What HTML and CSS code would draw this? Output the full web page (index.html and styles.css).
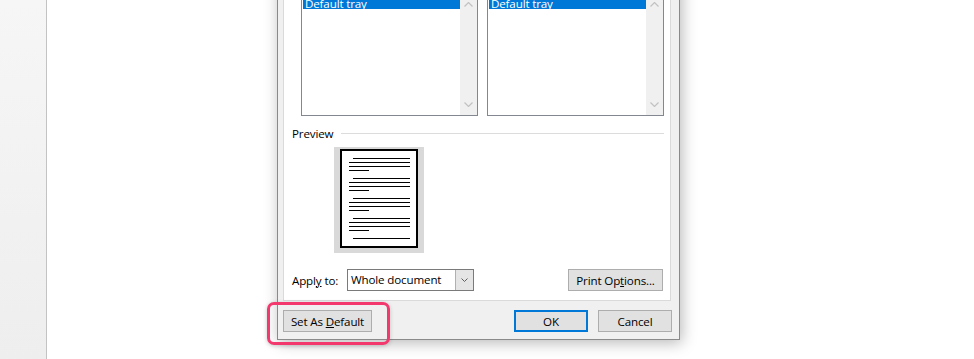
FILE: index.html
```html
<!DOCTYPE html>
<html lang="en">

<head>
  <meta charset="UTF-8">
  <title>Page Setup - Paper</title>
  <link rel="stylesheet" href="styles.css">
</head>

<body>
  <div class="screen">
    <div class="sidebar"></div>
    <div class="desk">
      <div class="dialog">
        <div class="panel">
          <div class="trays">
            <div class="listbox">
              <div class="items">
                <div class="item selected">Default tray</div>
              </div>
              <div class="scrollbar">
                <div class="arrow">
                  <svg width="9" height="5" viewBox="0 0 9 5"><path d="M0.5 4.5 L4.5 0.5 L8.5 4.5" /></svg>
                </div>
                <div class="arrow">
                  <svg width="9" height="5" viewBox="0 0 9 5"><path d="M0.5 0.5 L4.5 4.5 L8.5 0.5" /></svg>
                </div>
              </div>
            </div>
            <div class="listbox">
              <div class="items">
                <div class="item selected">Default tray</div>
              </div>
              <div class="scrollbar">
                <div class="arrow">
                  <svg width="9" height="5" viewBox="0 0 9 5"><path d="M0.5 4.5 L4.5 0.5 L8.5 4.5" /></svg>
                </div>
                <div class="arrow">
                  <svg width="9" height="5" viewBox="0 0 9 5"><path d="M0.5 0.5 L4.5 4.5 L8.5 0.5" /></svg>
                </div>
              </div>
            </div>
          </div>

          <div class="group-title">
            <span>Preview</span>
            <div class="rule"></div>
          </div>

          <div class="preview">
            <svg width="90" height="106" viewBox="0 0 90 106">
              <rect x="0" y="0" width="90" height="106" fill="#d9d9d9" />
              <rect x="7" y="3" width="76" height="97" fill="#fff" stroke="#000" stroke-width="2" />
              <g stroke="#000" stroke-width="1">
                <path d="M19 11.5 H76 M15 15.5 H76 M15 19.5 H76 M15 23.5 H35" />
                <path d="M19 31.5 H76 M15 35.5 H76 M15 39.5 H76 M15 43.5 H35" />
                <path d="M19 51.5 H76 M15 55.5 H76 M15 59.5 H76 M15 63.5 H35" />
                <path d="M19 71.5 H76 M15 75.5 H76 M15 79.5 H76 M15 83.5 H35" />
                <path d="M19 91.5 H76" />
              </g>
            </svg>
          </div>

          <div class="apply-row">
            <label class="apply-label">Appl<u>y</u> to:</label>
            <div class="combo">
              <span class="combo-value">Whole document</span>
              <span class="combo-button">
                <svg width="7" height="4" viewBox="0 0 7 4"><path d="M0.5 0.5 L3.5 3.5 L6.5 0.5" /></svg>
              </span>
            </div>
            <button class="btn print-options">Print Op<u>t</u>ions...</button>
          </div>
        </div>

        <div class="footer">
          <button class="btn set-default">Set As <u>D</u>efault</button>
          <button class="btn ok">OK</button>
          <button class="btn cancel">Cancel</button>
          <div class="highlight"></div>
        </div>
      </div>
    </div>
  </div>
</body>

</html>
```

FILE: styles.css
```css
body {
  margin: 0;
  padding: 0;
  background: #fff;
  font-family: "Open Sans", Arial, sans-serif;
  font-size: 11.6px;
  letter-spacing: -0.15px;
  color: #000;
  overflow: hidden;
}

.screen {
  display: flex;
  height: 359px;
}

.sidebar {
  width: 46px;
  background: linear-gradient(#f6f6f6, #eeeeee);
  border-right: 1px solid #c3c3c3;
}

.desk {
  flex: 1;
  padding-left: 230px;
}

.dialog {
  box-sizing: border-box;
  width: 403px;
  height: 370px;
  margin-top: -30px;
  padding: 0 7px 0 5px;
  background: #f0f0f0;
  border: 1px solid #8a8a8a;
  border-top: none;
  box-shadow: 2px 3px 14px rgba(0, 0, 0, 0.28);
}

/* white tab page */
.panel {
  box-sizing: border-box;
  height: 331px;
  margin-right: 1px;
  padding-top: 24px;
  background: #fff;
  border: 1px solid #dadada;
  border-top: none;
}

.trays {
  display: flex;
  gap: 9px;
  margin-left: 17px;
}

.listbox {
  box-sizing: border-box;
  display: flex;
  width: 177px;
  height: 122px;
  border: 1px solid #828790;
  border-top: none;
  background: #fff;
}

.items {
  flex: 1;
  padding-left: 1px;
}

.item {
  height: 13px;
  padding-top: 2px;
  line-height: 15px;
  padding-left: 2px;
  white-space: nowrap;
}

.item.selected {
  background: #0078d7;
  color: #fff;
}

.scrollbar {
  width: 17px;
  padding: 2px 0;
  display: flex;
  flex-direction: column;
  justify-content: space-between;
  background: #f0f0f0;
}

.arrow {
  height: 17px;
  display: flex;
  align-items: center;
  justify-content: center;
}

.arrow svg path {
  fill: none;
  stroke: #c2c2c2;
  stroke-width: 1.2;
}

.group-title {
  display: flex;
  align-items: center;
  height: 16px;
  margin: 9px 6px 0 8px;
}

.rule {
  flex: 1;
  margin-left: 8px;
  border-top: 1px solid #dcdcdc;
}

.preview {
  margin: 6px 0 0 50px;
  width: 90px;
  height: 106px;
}

.preview svg {
  display: block;
}

.apply-row {
  display: flex;
  align-items: center;
  height: 22px;
  margin: 16px 7px 0 8px;
}

.apply-label {
  width: 55px;
}

.combo {
  box-sizing: border-box;
  display: flex;
  width: 127px;
  height: 22px;
  border: 1px solid #7a7a7a;
  background: #fff;
}

.combo-value {
  flex: 1;
  padding-left: 3px;
  line-height: 20px;
}

.combo-button {
  width: 17px;
  display: flex;
  align-items: center;
  justify-content: center;
  background: #e5e5e5;
  border-left: 1px solid #b0b0b0;
}

.combo-button path {
  fill: none;
  stroke: #606060;
  stroke-width: 1;
}

.btn {
  box-sizing: border-box;
  height: 22px;
  padding: 0;
  font-family: inherit;
  font-size: 11.6px;
  letter-spacing: -0.15px;
  color: #000;
  background: #e1e1e1;
  border: 1px solid #adadad;
}

.print-options {
  width: 95px;
  margin-left: auto;
}

.footer {
  position: relative;
  display: flex;
  margin-top: 9px;
}

.set-default {
  width: 89px;
}

.ok {
  width: 74px;
  margin-left: auto;
  border: 2px solid #0078d7;
}

.cancel {
  width: 74px;
  margin-left: 10px;
}

.highlight {
  position: absolute;
  left: -16px;
  top: -8px;
  width: 123px;
  height: 43px;
  box-sizing: border-box;
  border: 3px solid #f2386c;
  border-radius: 7px;
  box-shadow: 0 1px 4px rgba(0, 0, 0, 0.2);
}
```
